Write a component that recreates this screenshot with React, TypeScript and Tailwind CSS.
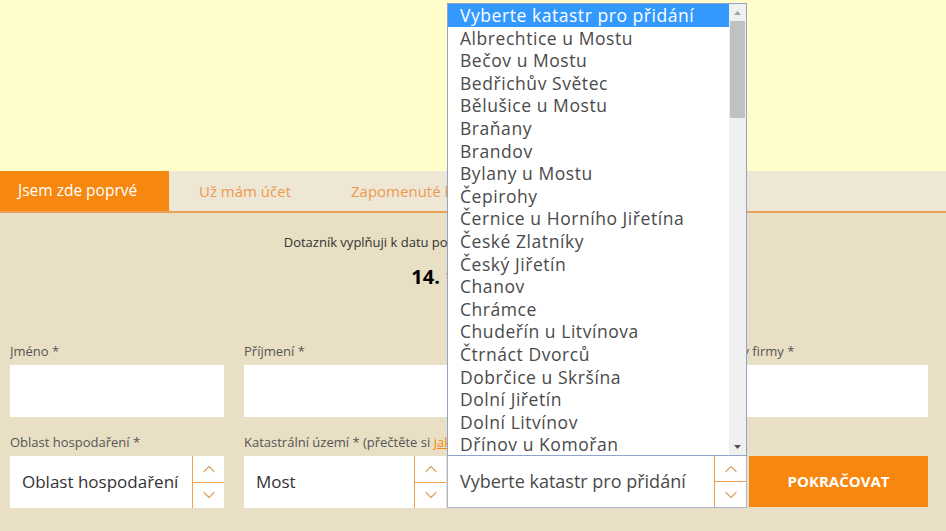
import { ChevronUp, ChevronDown } from 'lucide-react';

const katastry = [
  'Vyberte katastr pro přidání',
  'Albrechtice u Mostu',
  'Bečov u Mostu',
  'Bedřichův Světec',
  'Bělušice u Mostu',
  'Braňany',
  'Brandov',
  'Bylany u Mostu',
  'Čepirohy',
  'Černice u Horního Jiřetína',
  'České Zlatníky',
  'Český Jiřetín',
  'Chanov',
  'Chrámce',
  'Chudeřín u Litvínova',
  'Čtrnáct Dvorců',
  'Dobrčice u Skršína',
  'Dolní Jiřetín',
  'Dolní Litvínov',
  'Dřínov u Komořan',
];

function Spinner() {
  return (
    <div className="flex flex-col w-[32px] border-l border-[#f0a050] h-full">
      <div className="flex-1 flex items-center justify-center border-b border-[#f0a050]">
        <ChevronUp className="w-5 h-5 text-[#dba570]" strokeWidth={1.5} />
      </div>
      <div className="flex-1 flex items-center justify-center">
        <ChevronDown className="w-5 h-5 text-[#dba570]" strokeWidth={1.5} />
      </div>
    </div>
  );
}

function Field({ label, className }: { label: React.ReactNode; className: string }) {
  return (
    <div className={className}>
      <div className="text-[13px] text-[#555] h-[23px] leading-[18px] whitespace-nowrap overflow-hidden">{label}</div>
      <div className="h-[52px] bg-white" />
    </div>
  );
}

export default function App() {
  return (
    <div className="relative w-[946px] h-[531px] overflow-hidden bg-[#e8dfc4] font-['Open_Sans',sans-serif]">
      <div className="h-[171px] bg-[#fffdc9]" />

      <div className="h-[42px] bg-[#efe7d5] border-b-2 border-[#eba15a] flex text-[15px]">
        <div className="w-[169px] bg-[#f7870f] text-white text-[15.5px] flex items-center pl-[18px]">Jsem zde poprvé</div>
        <div className="w-[152px] text-[#ec9a4e] flex items-center justify-center">Už mám účet</div>
        <div className="text-[#ec9a4e] flex items-center pl-[30px]">Zapomenuté heslo</div>
      </div>

      <div className="pt-[20px] text-center">
        <div className="text-[13px] text-[#333] leading-[18px]">Dotazník vyplňuji k datu podání jednotné žádosti o dotace SZIF</div>
        <div className="mt-[14px] text-[20px] font-bold text-black leading-[24px] pr-[10px]">14. 11. 2017</div>
      </div>

      <div className="mt-[53px] px-[10px] flex gap-[20px]">
        <Field label="Jméno *" className="w-[214px]" />
        <Field label="Příjmení *" className="w-[214px]" />
        <Field label="E-mail *" className="w-[214px]" />
        <Field label="Název firmy *" className="w-[216px]" />
      </div>

      <div className="mt-[16px] px-[10px] flex items-end">
        <div className="w-[214px]">
          <div className="text-[13px] text-[#555] h-[23px] leading-[18px]">Oblast hospodaření *</div>
          <div className="h-[52px] bg-white flex items-center">
            <div className="flex-1 pl-[12px] text-[17px] text-[#333]">Oblast hospodaření</div>
            <Spinner />
          </div>
        </div>
        <div className="w-[202px] ml-[20px]">
          <div className="text-[13px] text-[#555] h-[23px] leading-[18px] whitespace-nowrap">
            Katastrální území * (přečtěte si <span className="text-[#f7870f] underline">jak</span>)
          </div>
          <div className="h-[52px] bg-white flex items-center">
            <div className="flex-1 pl-[12px] text-[17px] text-[#333]">Most</div>
            <Spinner />
          </div>
        </div>
        <div className="w-[300px] ml-[1px] h-[53px] bg-white border border-[#a8b4dc] flex items-center">
          <div className="flex-1 pl-[12px] text-[18px] text-[#4a4a4a]">Vyberte katastr pro přidání</div>
          <Spinner />
        </div>
        <button className="w-[179px] ml-[2px] h-[51px] mb-[1px] bg-[#f7870f] text-white font-bold text-[15px] uppercase">
          Pokračovat
        </button>
      </div>

      <div className="absolute left-[447px] top-[3px] w-[300px] h-[453px] bg-white border border-[#8fa3cc] flex">
        <div className="flex-1">
          {katastry.map((k, i) => (
            <div
              key={k}
              className={
                'h-[22.6px] leading-[22px] pl-[12px] text-[17.5px] tracking-[0.55px] whitespace-nowrap ' +
                (i === 0 ? 'bg-[#3399ff] text-white' : 'text-[#4a4a4a]')
              }
            >
              {k}
            </div>
          ))}
        </div>
        <div className="w-[17px] bg-[#f0f0f0] flex flex-col">
          <div className="h-[17px] flex items-center justify-center">
            <svg width="7" height="4" viewBox="0 0 7 4"><path d="M0 4 L3.5 0 L7 4 Z" fill="#a3a3a3" /></svg>
          </div>
          <div className="mx-[1px] h-[97px] bg-[#c1c1c1]" />
          <div className="flex-1" />
          <div className="h-[17px] flex items-center justify-center">
            <svg width="7" height="4" viewBox="0 0 7 4"><path d="M0 0 L3.5 4 L7 0 Z" fill="#505050" /></svg>
          </div>
        </div>
      </div>
    </div>
  );
}
